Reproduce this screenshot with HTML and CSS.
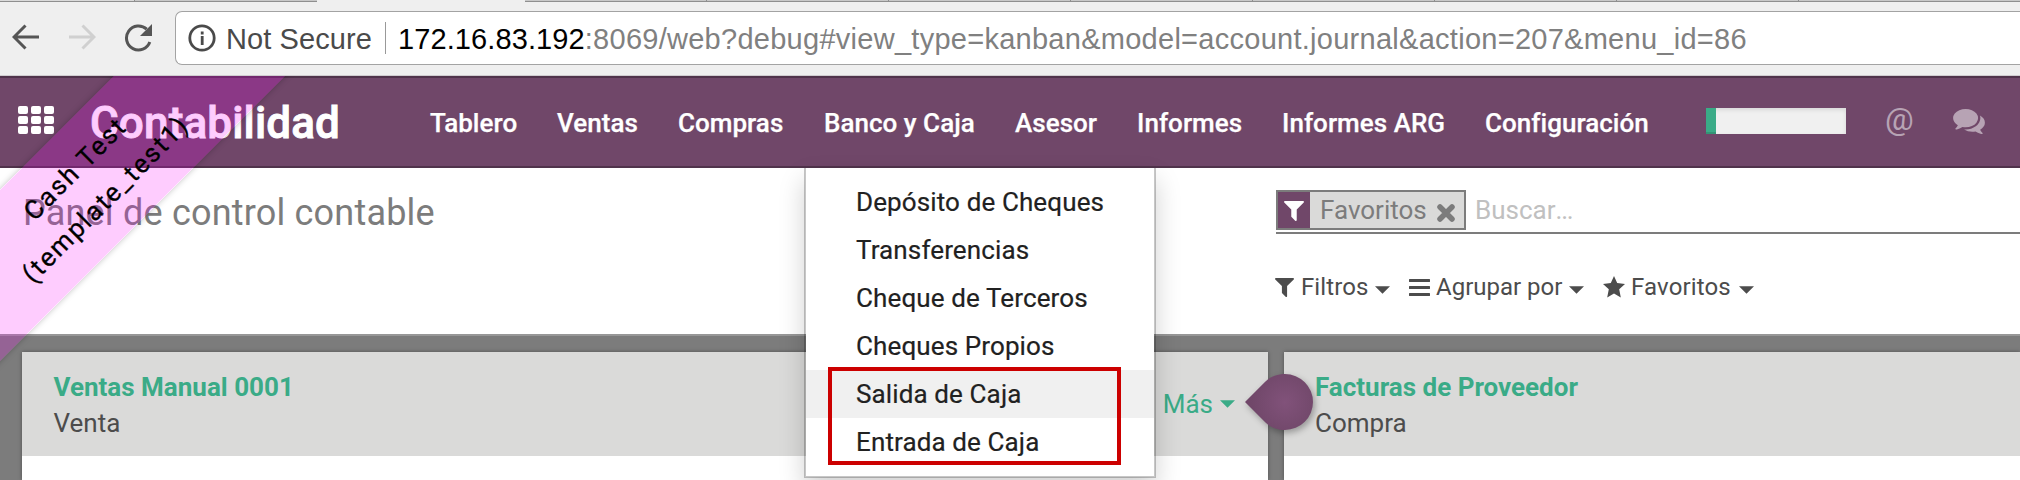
FILE: index.html
```html
<!DOCTYPE html>
<html lang="es">
<head>
<meta charset="utf-8">
<title>Contabilidad</title>
<link rel="stylesheet" href="styles.css">
</head>
<body>
<svg class="defs" width="0" height="0">
  <symbol id="funnel" viewBox="0 0 1408 1408"><path d="M1403 39q17 41-14 70L896 602v742q0 42-39 59-13 5-25 5-27 0-45-19l-256-256q-19-19-19-45V602L19 109q-31-29-14-70Q22 0 64 0h1280q42 0 59 39z"/></symbol>
  <symbol id="caret" viewBox="0 0 16 8"><path d="M0 0h16L8 8z"/></symbol>
</svg>
<header class="browser">
  <div class="tabs"><i class="tab tab-first"></i><i class="tab tab-left"></i><i class="tab-active"></i><i class="tab"></i><i class="tab"></i><i class="tab"></i><i class="tab"></i><i class="tab"></i><i class="tab"></i><i class="tab"></i><i class="tab tab-last"></i></div>
  <div class="toolbar">
    <svg class="arrow" width="28" height="28" viewBox="0 0 28 28"><path d="M27 14H3M13.5 2.5L2 14l11.5 11.5"/></svg>
    <svg class="arrow off" width="28" height="28" viewBox="0 0 28 28"><path d="M1 14h24M14.500 2.500L26 14 14.500 25.500"/></svg>
    <svg class="reload" width="30" height="30" viewBox="0 0 30 30"><path class="ring" d="M25.800 19A12 12 0 1 1 22.700 6.200"/><path d="M28 1v12H16z"/></svg>
    <div class="address">
      <svg class="info" width="28" height="28" viewBox="0 0 28 28"><circle cx="14" cy="14" r="12.200"/><path d="M14.200 12v9M14.200 7.500v3"/></svg>
      <span class="secure">Not Secure</span>
      <span class="rule"></span>
      <span class="url"><b>172.16.83.192</b><span>:8069/web?debug#view_type=kanban&amp;model=account.journal&amp;action=207&amp;menu_id=86</span></span>
    </div>
  </div>
</header>
<main class="app">
  <nav class="navbar">
    <div class="apps"><i></i><i></i><i></i><i></i><i></i><i></i><i></i><i></i><i></i></div>
    <span class="brand">Contabilidad</span>
    <div class="menu">
      <a class="m1">Tablero</a><a class="m2">Ventas</a><a class="m3">Compras</a><a class="m4">Banco y Caja</a><a class="m5">Asesor</a><a class="m6">Informes</a><a class="m7">Informes ARG</a><a class="m8">Configuración</a>
    </div>
    <div class="progress"><i></i></div>
    <span class="at">@</span>
    <svg class="chat" width="32" height="25" viewBox="0 0 1792 1408"><path d="M1408 512q0 139-94 257t-256.500 186.500T704 1024q-86 0-176-16-124 88-278 128-36 9-86 16h-3q-11 0-20.500-8t-11.500-21q-1-3-1-6.500t.5-6.500 2-6l2.500-5 3.500-5.500 4-5 4.500-5 4-4.500q5-6 23-25t26-29.500 22.500-29 25-38.500 20.500-44q-124-72-195-177T0 512q0-139 94-257T350.500 68.500 704 0t353.500 68.500T1314 255t94 257zm384 256q0 120-71 224.500T1526 1169q10 24 20.500 44t25 38.500 22.500 29 26 29.500 23 25q1 1 4 4.500t4.500 5 4 5 3.500 5.500l2.500 5 2 6 .5 6.500-1 6.500q-3 14-13 22t-22 7q-50-7-86-16-154-40-278-128-90 16-176 16-271 0-472-132 58 4 88 4 161 0 309-45t264-129q125-92 192-212t67-254q0-77-23-152 129 71 204 178t75 230z"/></svg>
  </nav>
  <section class="panel">
    <h1>Panel de control contable</h1>
    <div class="search">
      <div class="query">
        <div class="facet"><span class="fi"><svg width="20" height="20"><use href="#funnel"/></svg></span><span class="ft">Favoritos</span><svg class="fx" width="18" height="18" viewBox="0 0 18 18"><path d="M3 3l12 12M15 3L3 15"/></svg></div>
        <span class="placeholder">Buscar<span class="dots">...</span></span>
      </div>
      <div class="options">
        <svg class="o-funnel" width="19" height="19"><use href="#funnel"/></svg><span class="o1">Filtros</span><svg class="caret" width="15" height="8"><use href="#caret"/></svg>
        <svg class="o-bars" width="21" height="17" viewBox="0 0 21 17"><path d="M1 1.500h19M1 8.500h19M1 15.500h19"/></svg><span class="o2">Agrupar por</span><svg class="caret" width="15" height="8"><use href="#caret"/></svg>
        <svg class="o-star" width="22" height="22" viewBox="0 0 22 22"><path d="M11 0l3.200 7.100 7.800.8-5.800 5.300L17.800 21.500 11 17.500l-6.800 4 1.600-8.300L0 7.900l7.800-.8z"/></svg><span class="o3">Favoritos</span><svg class="caret" width="15" height="8"><use href="#caret"/></svg>
      </div>
    </div>
  </section>
  <section class="kanban">
    <article class="card">
      <div class="head"><div><h2 class="t1">Ventas Manual 0001</h2><p class="p1">Venta</p></div><div class="more"><span>Más</span><svg width="15" height="8"><use href="#caret"/></svg></div></div>
    </article>
    <article class="card">
      <div class="head"><div><h2 class="t2">Facturas de Proveedor</h2><p class="p2">Compra</p></div></div>
      <svg class="drop" width="80" height="76" viewBox="0 0 80 76"><defs><radialGradient id="g" gradientUnits="userSpaceOnUse" cx="45" cy="34" r="34"><stop offset="0" stop-color="#81527a"/><stop offset="1" stop-color="#704769"/></radialGradient></defs><path fill="url(#g)" d="M5 34L25.200 13.800C31 8 38 6 45 6a28 28 0 0 1 0 56C38 62 31 60 25.200 54.200z"/></svg>
    </article>
  </section>
  <div class="dropdown">
    <a class="d1">Depósito de Cheques</a><a class="d2">Transferencias</a><a class="d3">Cheque de Terceros</a><a class="d4">Cheques Propios</a><a class="d5 hover">Salida de Caja</a><a class="d6">Entrada de Caja</a>
    <div class="mark"></div>
  </div>
  <div class="ribbon"><span class="r1">Cash Test</span><span class="r2">(template_test1)</span></div>
</main>
</body>
</html>
```
FILE: styles.css
```css
* { box-sizing: border-box; }
body { margin: 0; width: 2020px; height: 480px; overflow: hidden; background: #7c7c7c; font: 26px/36px Roboto, sans-serif; color: #4c4c4c; display: flex; flex-direction: column; }
h1, h2, p { margin: 0; font-weight: 400; }
svg { display: block; flex: none; }
span, a { white-space: nowrap; }
.defs { display: none; }

.browser { flex: none; height: 76px; background: #efefef; border-bottom: 1px solid #d0cdd0; font-family: "Liberation Sans", sans-serif; }
.tabs { height: 2px; display: flex; }
.tab { flex: none; width: 182px; background: #c8c8c8; border-bottom: 1px solid #8f8f8f; border-right: 1px solid #8f8f8f; }
.tab-first { width: 135px; background: #dadada; }
.tab-left { border-right: 0; }
.tab-last { flex: 1; width: auto; border-right: 0; }
.tab-active { flex: none; width: 208px; }
.toolbar { display: flex; height: 73px; padding: 9px 0 10px 12px; align-items: flex-start; }
.arrow { margin: 12px 28px 0 0; fill: none; stroke: #555; stroke-width: 3; }
.off { stroke: #d0d0d0; }
.reload { margin: 12px 21px 0 0; fill: #555; }
.ring { fill: none; stroke: #555; stroke-width: 3; }
.address { flex: 1; height: 54px; border: 1px solid #a3a3a3; border-right: 0; border-radius: 7px 0 0 7px; background: #fff; display: flex; align-items: center; padding-left: 12px; font-size: 29px; color: #4a4a4a; }
.info { fill: none; stroke: #4a4a4a; stroke-width: 2.8; }
.secure { width: 147px; margin-left: 10px; padding-top: 2px; letter-spacing: .1px; }
.rule { width: 1px; height: 32px; background: #999; margin: 0 12px 0 12px; }
.url { color: #808080; padding-top: 2px; letter-spacing: .27px; }
.url b { color: #000; font-weight: 400; letter-spacing: .1px; }

.app { position: relative; flex: 1; display: flex; flex-direction: column; overflow: hidden; }
.navbar { flex: none; height: 92px; background: #704769; border: solid #50334b; border-width: 2px 0; display: flex; align-items: center; color: #fff; }
.apps { width: 36px; margin: -4px 37px 0 18px; display: grid; grid-template-columns: repeat(3, 10px); gap: 2px 3px; }
.apps i { height: 8px; background: #fff; border-radius: 2px; }
.brand { width: 339px; font-size: 44px; line-height: 60px; font-weight: 500; -webkit-text-stroke: .9px #fff; text-indent: -1px; letter-spacing: .15px; padding-top: 2px; }
.menu { display: flex; width: 1276px; font-weight: 500; padding-top: 2px; letter-spacing: .03px; -webkit-text-stroke: .25px #fff; }
.m1 { width: 127px; } .m2 { width: 121px; } .m3 { width: 146px; } .m4 { width: 191px; }
.m5 { width: 122px; } .m6 { width: 145px; } .m7 { width: 203px; }
.progress { flex: none; width: 140px; height: 26px; margin-top: -2px; background: #f0f0f0; box-shadow: inset 0 2px 4px rgba(0,0,0,.1); }
.progress i { display: block; width: 10px; height: 26px; background: #3aab87; border-bottom: 2px solid #339576; }
.at { width: 32px; margin: -6px 0 0 39px; font-size: 32px; color: #b7a3b4; }
.chat { margin: -2px 0 0 36px; fill: #b7a3b4; }

.panel { flex: none; height: 166px; background: #fff; display: flex; }
h1 { width: 1253px; margin-left: 23px; padding-top: 20px; font-size: 36px; line-height: 50px; letter-spacing: .2px; color: #7c7c7c; white-space: nowrap; }
.search { flex: 1; padding-top: 22px; }
.query { display: flex; height: 44px; border-bottom: 2px solid #7c7c7c; }
.facet { width: 190px; height: 40px; border: 2px solid #7c7c7c; background: #dadad9; display: flex; align-items: center; color: #7c7c7c; }
.fi { flex: none; width: 32px; height: 36px; background: #704769; fill: #fff; display: flex; align-items: center; justify-content: center; padding-top: 2px; }
.ft { flex: none; width: 127px; padding-left: 10px; }
.fx { margin-top: 6px; stroke: #7c7c7c; stroke-width: 5.500; stroke-linecap: round; }
.placeholder { color: #c0c0c0; margin: 2px 0 0 9px; }
.dots { letter-spacing: -1.2px; }
.options { display: flex; align-items: center; height: 36px; margin: 35px 0 0 -1px; font-size: 24px; fill: #4c4c4c; }
.caret { margin-top: 5px; }
.o1 { width: 74px; margin-left: 7px; letter-spacing: .1px; }
.o2 { width: 133px; margin-left: 6px; }
.o3 { width: 108px; margin-left: 6px; letter-spacing: .15px; }
.o-bars { margin-left: 19px; stroke: #4c4c4c; stroke-width: 3; stroke-linecap: round; }
.o-star { margin-left: 19px; }

.kanban { flex: 1; background: #7c7c7c; border-top: 2px solid #979797; padding: 16px 0 0 22px; display: grid; grid-template-columns: 1246px 736px; gap: 16px; }
.card { position: relative; background: #fff; box-shadow: 0 0 4px rgba(0,0,0,.35); }
.head { height: 104px; background: #dadad9; padding: 17px 33px 17px 31px; display: flex; justify-content: space-between; }
.head h2 { font-size: 26px; font-weight: 700; color: #3aab87; }
.t1, .p1 { padding-left: .5px; }
.more { display: flex; align-items: center; gap: 7px; color: #3aab87; fill: #3aab87; height: 69px; }
.drop { position: absolute; left: -44px; top: 16px; filter: drop-shadow(2px 3px 3px rgba(0,0,0,.3)); }

.dropdown { position: absolute; left: 804px; top: 92px; width: 352px; height: 310px; padding: 10px 0; background: #fff; background-clip: padding-box; border: 2px solid rgba(0,0,0,.22); border-top: 0; box-shadow: 0 12px 24px rgba(0,0,0,.18); display: flex; flex-direction: column; color: #212121; letter-spacing: .12px; -webkit-text-stroke: .2px #212121; }
.dropdown a { height: 48px; line-height: 48px; padding-left: 50px; }
.dropdown .hover { background: #f0f0f0; }
.mark { position: absolute; left: 22px; top: 199px; width: 293px; height: 98px; border: 4px solid #c00; }

.ribbon { position: absolute; left: -209px; top: 48px; width: 600px; height: 121px; padding-top: 17px; transform: rotate(-45deg); background: rgba(250,0,250,.2); box-shadow: 0 0 6px rgba(0,0,0,.25); color: #000; display: flex; flex-direction: column; align-items: center; font-size: 26px; line-height: 43px; letter-spacing: 2px; -webkit-text-stroke: .3px #000; }
```
